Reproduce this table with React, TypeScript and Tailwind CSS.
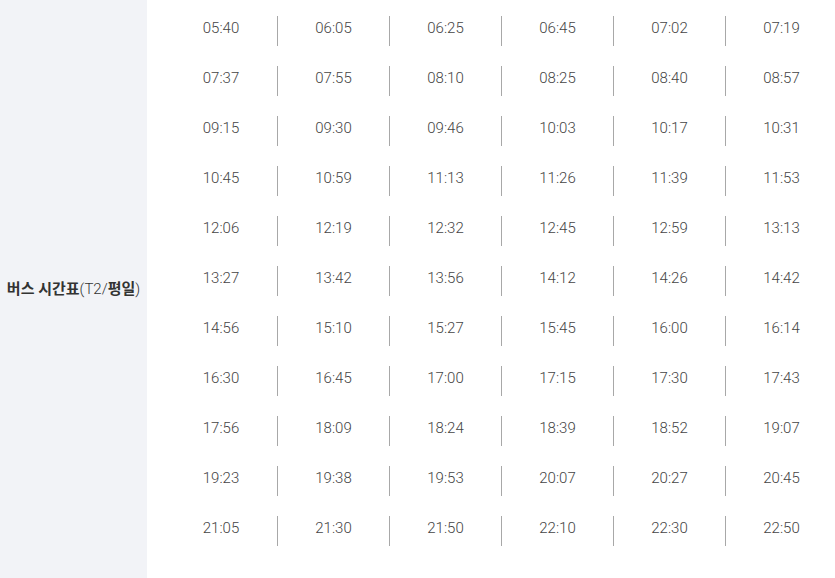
import React from "react";

const times = [
  ["05:40", "06:05", "06:25", "06:45", "07:02", "07:19"],
  ["07:37", "07:55", "08:10", "08:25", "08:40", "08:57"],
  ["09:15", "09:30", "09:46", "10:03", "10:17", "10:31"],
  ["10:45", "10:59", "11:13", "11:26", "11:39", "11:53"],
  ["12:06", "12:19", "12:32", "12:45", "12:59", "13:13"],
  ["13:27", "13:42", "13:56", "14:12", "14:26", "14:42"],
  ["14:56", "15:10", "15:27", "15:45", "16:00", "16:14"],
  ["16:30", "16:45", "17:00", "17:15", "17:30", "17:43"],
  ["17:56", "18:09", "18:24", "18:39", "18:52", "19:07"],
  ["19:23", "19:38", "19:53", "20:07", "20:27", "20:45"],
  ["21:05", "21:30", "21:50", "22:10", "22:30", "22:50"],
];

export default function App() {
  return (
    <div
      className="flex w-[835px] h-[578px] bg-white overflow-hidden"
      style={{ fontFamily: "Roboto, 'Noto Sans CJK KR', sans-serif" }}
    >
      <div className="w-[147px] shrink-0 bg-[#f2f3f7] flex items-center justify-center">
        <span className="text-[15px] text-[#333] whitespace-nowrap">
          <b className="font-bold">버스 시간표</b>
          <span className="font-light">(T2/</span>
          <b className="font-bold">평일</b>
          <span className="font-light">)</span>
        </span>
      </div>
      <div className="pl-[18px] pt-[16px] pb-[32px] grid grid-cols-[repeat(6,112px)] gap-y-[20px] shrink-0">
        {times.flat().map((t, i) => (
          <div
            key={i}
            className={`h-[30px] flex justify-center text-[15px] font-light leading-[24px] text-[#444] ${
              i % 6 === 0 ? "" : "border-l border-[#a8a8a8]"
            }`}
          >
            {t}
          </div>
        ))}
      </div>
    </div>
  );
}
